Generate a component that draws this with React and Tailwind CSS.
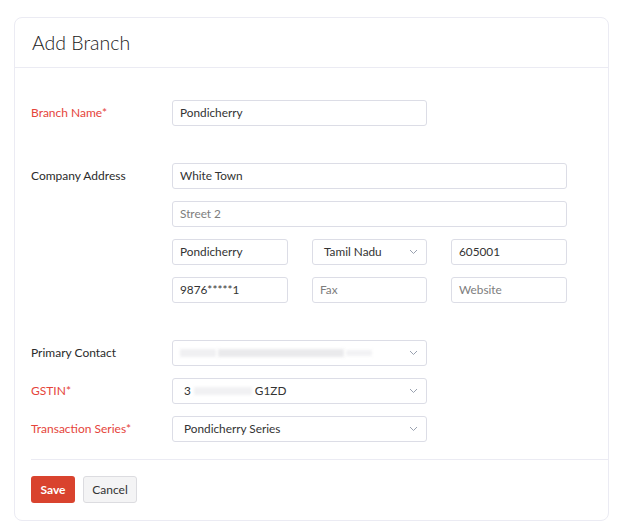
import React from 'react';

const font = { fontFamily: 'Lato, "Liberation Sans", sans-serif' };

const Chevron = () => (
  <svg width="9" height="6" viewBox="0 0 9 6" className="text-gray-400">
    <path d="M1 1l3.5 3.5L8 1" fill="none" stroke="currentColor" strokeWidth="1" />
  </svg>
);

const Input = ({ value, placeholder, className = '' }) => (
  <div className={`h-[26px] flex items-center px-[7px] border border-[#dcdde6] rounded-[3px] bg-white text-[11.8px] ${className}`}>
    {value ? <span className="text-[#333]">{value}</span> : <span className="text-[#7d7d7d]">{placeholder}</span>}
  </div>
);

const Select = ({ children, className = '' }) => (
  <div className={`h-[26px] flex items-center justify-between pl-[11px] pr-[8px] border border-[#dcdde6] rounded-[3px] bg-white text-[11.8px] text-[#333] ${className}`}>
    <div className="flex items-center">{children}</div>
    <Chevron />
  </div>
);

const Label = ({ children, required }) => (
  <div className={`w-[141px] shrink-0 text-[12px] leading-[26px] ${required ? 'text-[#e5443b]' : 'text-[#2b2b2b]'}`}>
    {children}
  </div>
);

export default function App() {
  return (
    <div className="bg-white w-[624px] h-[530px] pt-[17px] pl-[14px]" style={font}>
      <div className="w-[595px] h-[504px] border border-[#ebebf3] rounded-[8px] flex flex-col">
        {/* Header */}
        <div className="h-[50px] shrink-0 flex items-center px-[17px] border-b border-[#ebebf3]">
          <h1 className="text-[19.5px] font-light text-[#222]">Add Branch</h1>
        </div>

        {/* Body */}
        <div className="pl-[16px] pt-[32px]">
          <div className="flex">
            <Label required>Branch Name*</Label>
            <Input value="Pondicherry" className="w-[255px]" />
          </div>

          <div className="flex mt-[37px]">
            <Label>Company Address</Label>
            <div className="flex flex-col gap-[12px] w-[395px]">
              <Input value="White Town" />
              <Input placeholder="Street 2" />
              <div className="grid grid-cols-[116px_115px_116px] gap-x-[24px]">
                <Input value="Pondicherry" />
                <Select>Tamil Nadu</Select>
                <Input value="605001" />
              </div>
              <div className="grid grid-cols-[116px_115px_116px] gap-x-[24px]">
                <Input value="9876*****1" />
                <Input placeholder="Fax" />
                <Input placeholder="Website" />
              </div>
            </div>
          </div>

          <div className="flex flex-col gap-[12px] mt-[37px]">
            <div className="flex">
              <Label>Primary Contact</Label>
              <Select className="w-[255px]">
                <div className="flex items-center gap-[2px] -ml-[4px]">
                  <div className="w-[36px] h-[8px] bg-[#f0f0f2] blur-[1.5px]" />
                  <div className="w-[126px] h-[8px] bg-[#eaeaec] blur-[1.5px]" />
                  <div className="w-[26px] h-[6px] bg-[#f2f2f4] blur-[1.5px]" />
                </div>
              </Select>
            </div>
            <div className="flex">
              <Label required>GSTIN*</Label>
              <Select className="w-[255px]">
                <span>3</span>
                <div className="w-[58px] h-[8px] mx-[3px] bg-[#f1f1f3] blur-[1.5px]" />
                <span>G1ZD</span>
              </Select>
            </div>
            <div className="flex">
              <Label required>Transaction Series*</Label>
              <Select className="w-[255px]">Pondicherry Series</Select>
            </div>
          </div>
        </div>

        {/* Footer */}
        <div className="ml-[16px] mt-[17px] border-t border-[#ebebf3]" />
        <div className="flex gap-[8px] pl-[16px] pt-[16px]">
          <button className="h-[27px] w-[44px] rounded-[3px] bg-[#d9432e] text-white text-[12px] font-bold">Save</button>
          <button className="h-[27px] w-[54px] rounded-[3px] bg-[#f4f4f5] border border-[#dcdce0] text-[#333] text-[12px]">Cancel</button>
        </div>
      </div>
    </div>
  );
}
